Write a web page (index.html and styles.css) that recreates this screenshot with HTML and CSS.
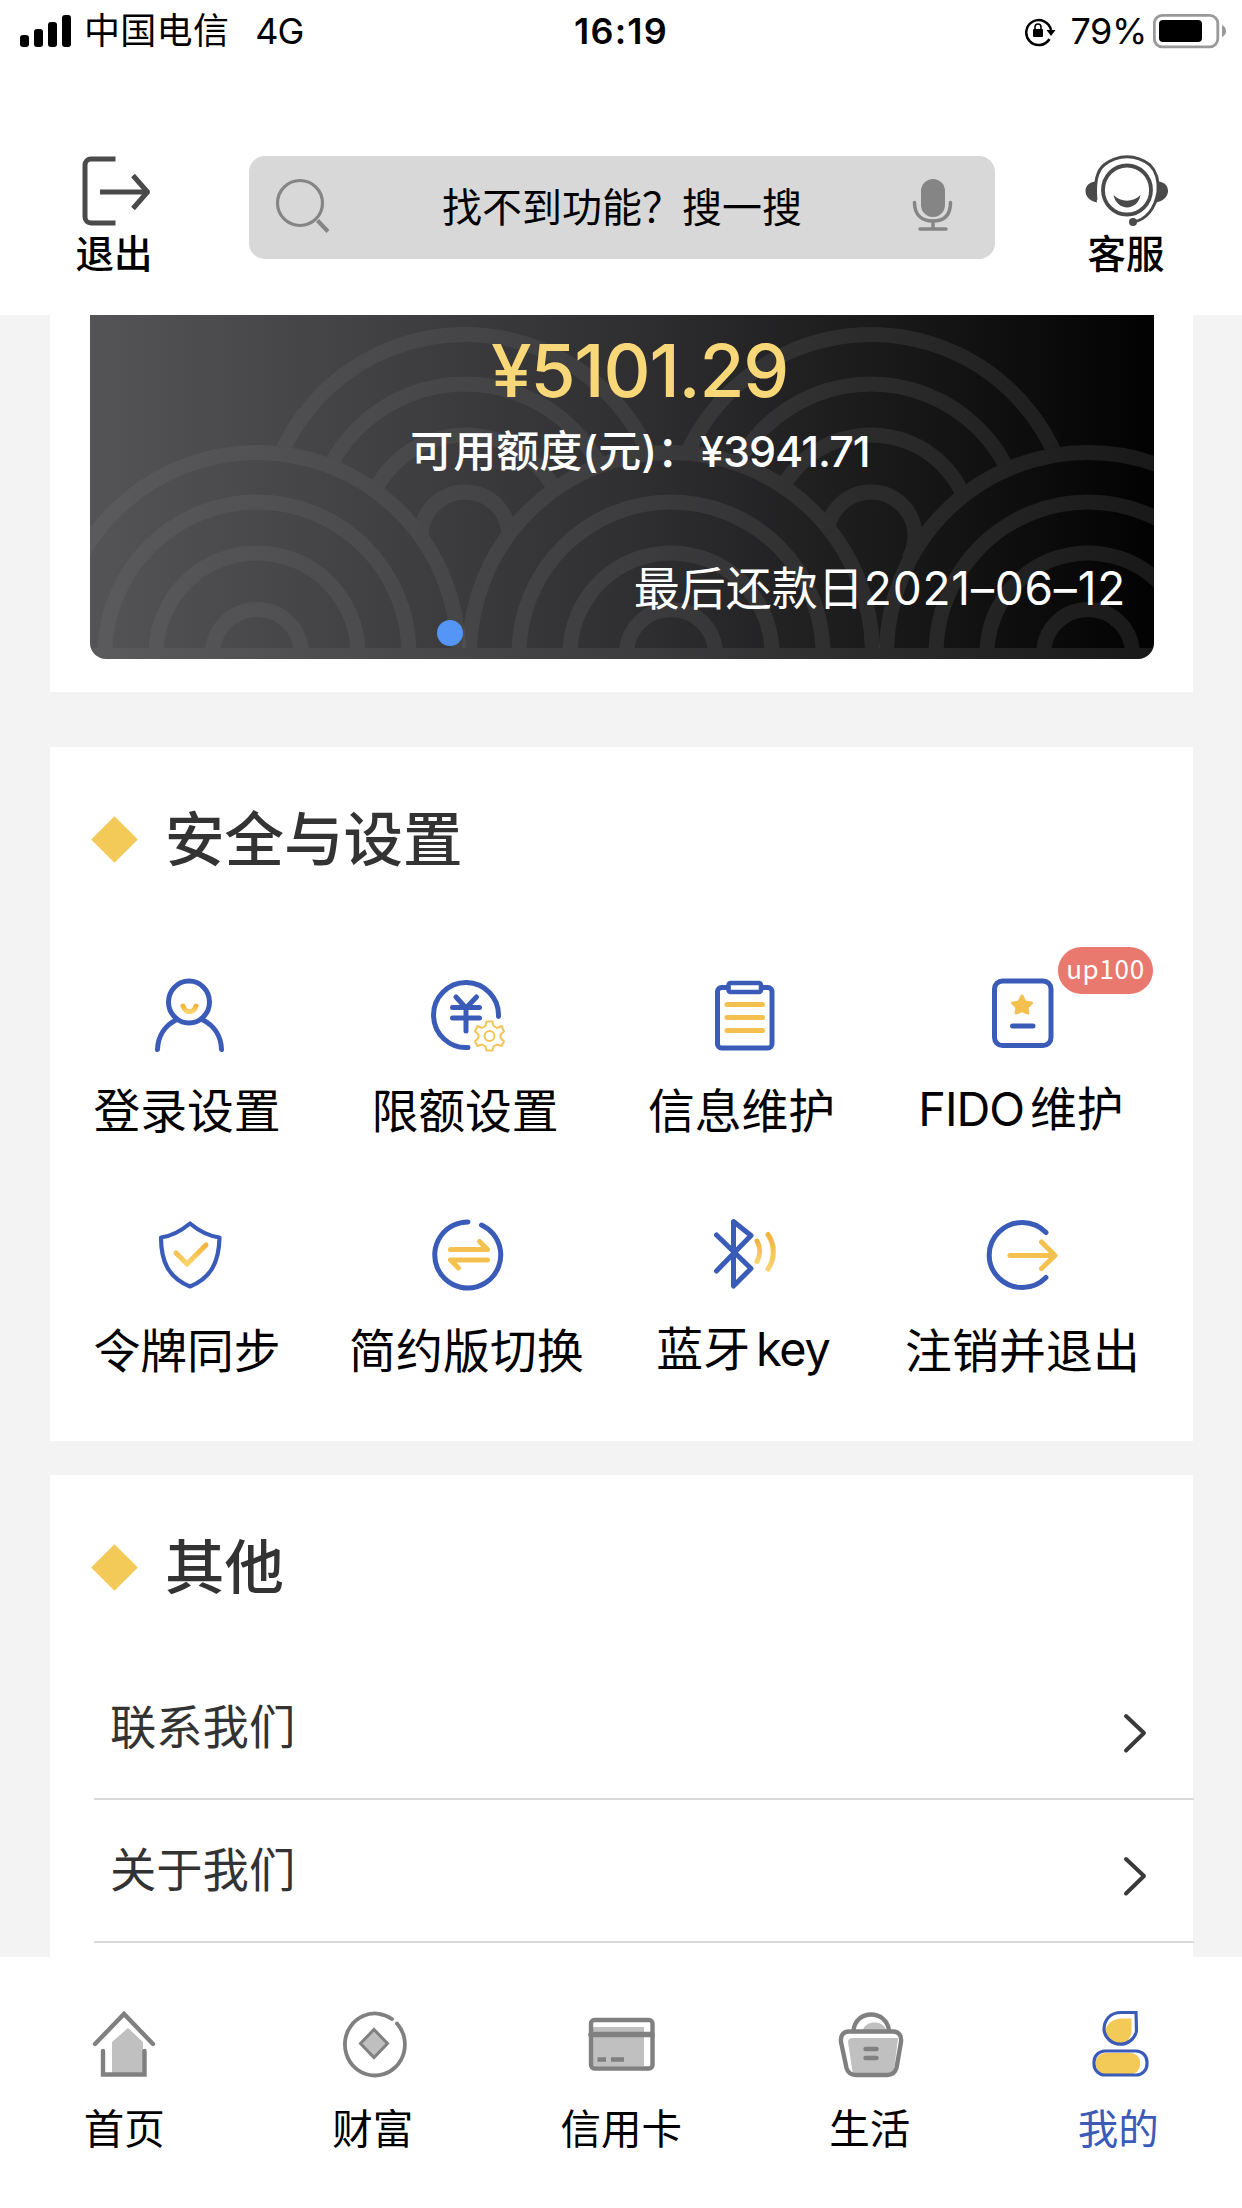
FILE: index.html
```html
<!DOCTYPE html>
<html lang="zh-CN">
<head>
<meta charset="utf-8">
<title>我的</title>
<link rel="stylesheet" href="styles.css">
</head>
<body>
<svg class="defs" width="0" height="0">
  <defs>
    <linearGradient id="gold" x1="0" y1="0" x2="0" y2="1"><stop offset="0" stop-color="#f3b33c"/><stop offset="1" stop-color="#f8d56c"/></linearGradient>
  </defs>
</svg>

<div class="status">
  <div class="status-left">
    <svg width="52" height="34" viewBox="20 13 52 34"><rect x="20" y="34" width="9" height="12" rx="3"/><rect x="34" y="28" width="9" height="18" rx="3"/><rect x="48" y="21" width="9" height="25" rx="3"/><rect x="62" y="14" width="9" height="32" rx="3"/></svg>
    <span class="carrier">中国电信</span><span class="net">4G</span>
  </div>
  <div class="clock">16:19</div>
  <div class="status-right">
    <svg width="34" height="32" viewBox="1021 16 34 32"><path d="M1048.500 40A12.500 12.500 0 1 1 1050 31" fill="none" stroke="#000" stroke-width="2.500"/><path d="M1045.500 31H1054.500L1050 37Z"/><rect x="1032" y="30" width="10" height="8" rx="1"/><path d="M1034 31v-3a3 3 0 0 1 6 0v3" fill="none" stroke="#000" stroke-width="1.600"/></svg>
    <span class="percent">79%</span>
    <svg width="74" height="36" viewBox="1153 12 74 36"><rect x="1154.300" y="14.300" width="63.500" height="31.500" rx="8" fill="none" stroke="#999" stroke-width="2.800"/><rect x="1159" y="19" width="43" height="22" rx="4"/><path d="M1222 24Q1226 26 1226 30T1222 36Z" fill="#999"/></svg>
  </div>
</div>

<header class="header">
  <div class="action">
    <svg width="84" height="76" viewBox="73 152 84 76" fill="none" stroke="#4a4a4a" stroke-width="5"><path d="M116.500 159H92a6 6 0 0 0-6 6V217a6 6 0 0 0 6 6H116.500"/><path d="M101 192H148M134 175.500L148.500 192L134 208.500" stroke-linejoin="round"/></svg>
    <span>退出</span>
  </div>
  <div class="search">
    <svg width="56" height="56" viewBox="274 177 56 56" fill="none" stroke="#858585" stroke-width="3.200"><circle cx="300" cy="203" r="22.500"/><path d="M317.500 220.500L328 231.500" stroke-width="4"/></svg>
    <span>找不到功能&#xFF1F;搜一搜</span>
    <svg width="42" height="56" viewBox="911 177 42 56"><rect x="921" y="179" width="24" height="38" rx="12" fill="#858585"/><path d="M914.500 202.500C914.500 215 922 221 933 221S950.500 215 950.500 202.500M933 221V229M920 229H946" fill="none" stroke="#858585" stroke-width="3.500" stroke-linecap="round"/></svg>
  </div>
  <div class="action">
    <svg width="90" height="76" viewBox="1081 152 90 76" fill="none" stroke="#4a4a4a" stroke-width="3"><ellipse cx="1127" cy="190" rx="24" ry="24.500" stroke-width="3.800"/><path d="M1096 200C1094 180 1098 170 1104 165C1118 154 1136 154 1150 165C1157 172 1159 180 1158 192C1155 209 1146 220 1133 222"/><path d="M1113.500 195C1121 202.500 1133 202.500 1140.500 195C1138 211 1117 212 1113.500 195Z" fill="#4a4a4a" stroke="none"/><path d="M1095 181.500C1082 183 1082 200 1097 202.500ZM1159 181.500C1171.500 183 1171.500 200 1156 202.500Z" fill="#4a4a4a" stroke="none"/><circle cx="1133" cy="222" r="4" fill="#4a4a4a" stroke="none"/></svg>
    <span>客服</span>
  </div>
</header>

<main class="content">
  <section class="panel account">
    <div class="bankcard">
      <svg class="waves" width="1064" height="344" viewBox="90 315 1064 344" fill="none" stroke="url(#wave)" stroke-width="15">
        <defs>
          <linearGradient id="wave" gradientUnits="userSpaceOnUse" x1="90" y1="0" x2="1154" y2="0"><stop offset="0" stop-color="#fff" stop-opacity=".04"/><stop offset="1" stop-color="#fff" stop-opacity=".09"/></linearGradient>
          <mask id="behind" maskUnits="userSpaceOnUse" x="90" y="315" width="1064" height="344"><rect x="90" y="315" width="1064" height="241" fill="#fff"/><g fill="#000" stroke="none"><circle cx="257" cy="654" r="209"/><circle cx="671" cy="654" r="209"/><circle cx="1088" cy="654" r="209"/></g></mask>
          <clipPath id="floor"><rect x="90" y="315" width="1064" height="333"/></clipPath>
        </defs>
        <g mask="url(#behind)"><circle cx="465" cy="536" r="201.500"/><circle cx="465" cy="536" r="152"/><circle cx="465" cy="536" r="101"/><circle cx="465" cy="536" r="44"/><circle cx="871" cy="536" r="201.500"/><circle cx="871" cy="536" r="152"/><circle cx="871" cy="536" r="101"/><circle cx="871" cy="536" r="44"/></g>
        <g clip-path="url(#floor)"><circle cx="257" cy="654" r="201.500"/><circle cx="257" cy="654" r="152"/><circle cx="257" cy="654" r="101"/><circle cx="257" cy="654" r="44.500"/><circle cx="671" cy="654" r="201.500"/><circle cx="671" cy="654" r="152"/><circle cx="671" cy="654" r="101"/><circle cx="671" cy="654" r="44.500"/><circle cx="1088" cy="654" r="201.500"/><circle cx="1088" cy="654" r="152"/><circle cx="1088" cy="654" r="101"/><circle cx="1088" cy="654" r="44.500"/></g>
        <rect x="90" y="648" width="1064" height="11" fill="url(#wave)" stroke="none"/>
      </svg>
      <div class="amount">¥5101.29</div>
      <div class="limit">可用额度(元)&#xFF1A;<span class="limit-value">¥3941.71</span></div>
      <div class="due">最后还款日<span class="due-date">2021–06–12</span></div>
      <i class="dot"></i>
    </div>
  </section>

  <section class="panel settings">
    <h2 class="title"><i class="diamond"></i>安全与设置</h2>
    <div class="grid">
      <div class="cell">
        <svg class="icon" viewBox="147 975 80 80"><ellipse cx="189" cy="1002" rx="20.500" ry="21"/><path d="M157.500 1049.500C158 1035 166 1025 176 1020M221.500 1049.500C221 1035 213 1025 203 1020"/><path class="gold" d="M183 1006C185.500 1013.500 193.500 1013.500 196 1006"/></svg>
        <span>登录设置</span>
      </div>
      <div class="cell">
        <svg class="icon" viewBox="425 975 80 80"><path d="M498.500 1016.500A32.500 32.500 0 1 0 468 1047.500"/><path d="M456 997L466 1008L476.500 997M452.500 1007.500H479.500M452.500 1018H479.500M466 1008V1031"/><g class="gear"><circle cx="489.500" cy="1036" r="5"/><path d="M486.500 1021.500H492.500L493.500 1026L497 1028L501.500 1026L504 1031.500L500.500 1034.500V1038L504 1041.500L501.500 1046L497 1044.500L493.500 1046.500L492.500 1050.500H486.500L485.500 1046.500L482 1044.500L477.500 1046L475 1041.500L478.500 1038V1034.500L475 1031.500L477.500 1026L482 1028L485.500 1026Z"/></g></svg>
        <span>限额设置</span>
      </div>
      <div class="cell nudge">
        <svg class="icon" viewBox="703 975 80 80"><path d="M728 987.500H721.500a4 4 0 0 0-4 4V1044a4 4 0 0 0 4 4H768a4 4 0 0 0 4-4V991.500a4 4 0 0 0-4-4H762"/><rect x="728.500" y="983" width="32.500" height="9" rx="2" stroke-width="4.500"/><path class="flat" d="M727 1004.500H762.500M727 1017.500H762.500M727 1030.500H762.500"/></svg>
        <span>信息维护</span>
      </div>
      <div class="cell raised">
        <svg class="icon" viewBox="981 975 80 80"><rect x="994.500" y="981" width="56.500" height="64.500" rx="8"/><path d="M1012.500 1026H1033" /><path class="star" d="M1022 996L1025 1002L1031.500 1003L1027 1007.500L1028 1013L1022 1010.500L1016 1013L1017 1007.500L1012.500 1003L1019 1002Z"/></svg>
        <span><b class="fido">FIDO</b><b class="thin">维护</b></span>
        <em class="badge">up100</em>
      </div>
      <div class="cell">
        <svg class="icon" viewBox="147 1215 80 80"><path stroke-width="4.200" d="M190 1223.500C181 1231 172 1236 161 1237.500C161 1262 169 1278 190 1286.500C211 1278 219 1262 219.500 1237.500C208 1236 199 1231 190 1223.500Z"/><path class="gold" d="M176 1253L187 1264L206 1245"/></svg>
        <span>令牌同步</span>
      </div>
      <div class="cell">
        <svg class="icon" viewBox="425 1215 80 80"><path d="M481.500 1225A33 33 0 1 1 468 1222"/><path class="flat" d="M450.500 1249.500H487.500L479.500 1241.500M487.500 1260H450.500L458.500 1268"/></svg>
        <span class="wide">简约版切换</span>
      </div>
      <div class="cell raised">
        <svg class="icon" viewBox="703 1215 80 80"><path d="M716.500 1235L751 1268.500L733.500 1286V1221.500L751 1235.500L716.500 1271"/><path class="gold" d="M757 1241C760.500 1247 760.500 1255 757 1261.500"/><path class="gold" d="M768 1234.500C775 1245 775 1259 768 1269"/></svg>
        <span>蓝牙<b class="key">key</b></span>
      </div>
      <div class="cell">
        <svg class="icon" viewBox="981 1215 80 80"><path d="M1046 1232.500A33 32.500 0 1 0 1046 1277.500"/><path class="flat" d="M1010 1255.500H1054M1041.500 1242L1055 1255.500L1041.500 1268.500"/></svg>
        <span class="wide">注销并退出</span>
      </div>
    </div>
  </section>

  <section class="panel others">
    <h2 class="title"><i class="diamond"></i>其他</h2>
    <div class="list">
      <div class="row"><span>联系我们</span><svg class="chevron" viewBox="0 0 26 42"><path d="M4 4L22 21L4 38.500"/></svg></div>
      <div class="row"><span>关于我们</span><svg class="chevron" viewBox="0 0 26 42"><path d="M4 4L22 21L4 38.500"/></svg></div>
    </div>
  </section>
</main>

<nav class="tabs">
  <div class="tab">
    <svg class="tab-icon" viewBox="84 2004 80 80"><path class="fill" d="M112 2075V2042L128 2028L143 2042V2075Z"/><path d="M95 2044L124 2014L153 2044M103 2051V2074.500H144.500V2051"/></svg>
    <span>首页</span>
  </div>
  <div class="tab">
    <svg class="tab-icon" viewBox="334 2004 80 80"><path d="M398 2023.500A30 31 0 1 1 393 2019" stroke-width="3.800"/><path d="M375 2029.500L388.500 2043.500L375 2057.500L361.500 2043.500Z" fill="#bfbfbf" stroke-width="3"/></svg>
    <span>财富</span>
  </div>
  <div class="tab">
    <svg class="tab-icon" viewBox="581 2004 80 80"><path class="fill" d="M593 2027H644V2066H593Z"/><rect x="591" y="2020" width="61.500" height="48.500" rx="3.500"/><path d="M591 2034.500H652" stroke-width="5.500"/><path d="M597.500 2059.500H606M611 2059.500H624" stroke-linecap="butt"/></svg>
    <span>信用卡</span>
  </div>
  <div class="tab">
    <svg class="tab-icon" viewBox="831 2004 80 80"><path class="fill" d="M864 2030C866 2020 885 2020 887 2030ZM849 2042Q849 2038 854 2038H899L895 2070Q893 2075 888 2075H854Z"/><path d="M854.500 2031C856 2009 888 2009 890 2031M850 2031.500H894Q903 2032 902 2042L897.500 2068Q895.500 2075 888 2075H857Q849.500 2075 847.500 2068L842 2042Q841 2032 850 2031.500Z"/><path d="M866.500 2049H877.500M866.500 2058H877.500"/></svg>
    <span>生活</span>
  </div>
  <div class="tab active">
    <svg class="tab-icon" viewBox="1078 2004 80 80"><path class="fill" d="M1131.500 2018.500H1122C1112 2018.500 1105 2025 1105 2033C1107 2042 1113 2045 1119 2045C1127 2044 1131.500 2037 1131.500 2031Z"/><rect class="fill" x="1096" y="2053" width="44" height="21" rx="9"/><path d="M1136 2012.500H1121C1110 2012.500 1104 2020 1104 2030A16.500 16.500 0 0 0 1136.500 2031Z"/><rect x="1094" y="2051" width="53" height="24" rx="11"/></svg>
    <span>我的</span>
  </div>
</nav>
</body>
</html>
```
FILE: styles.css
```css
* { box-sizing: border-box; margin: 0; padding: 0; }
body {
  width: 1242px;
  height: 2208px;
  overflow: hidden;
  display: flex;
  flex-direction: column;
  background: #f3f3f3;
  color: #000;
  font-family: Inter, "Noto Sans CJK SC", sans-serif;
}
svg { display: block; flex: none; }
span, div, h2 { white-space: nowrap; }
.defs { position: absolute; }

/* status bar */
.status {
  height: 62px;
  flex: none;
  display: grid;
  grid-template-columns: 1fr auto 1fr;
  align-items: center;
  padding: 0 15px 0 20px;
  background: #fff;
  font-size: 36px;
  line-height: 62px;
}
.status-left, .status-right { display: flex; align-items: center; }
.status-right { justify-content: flex-end; }
.carrier { margin-left: 12px; letter-spacing: .3px; }
.net { margin-left: 26px; letter-spacing: -1px; }
.clock { margin-right: 5px; font-weight: 600; letter-spacing: 1.2px; }
.percent { margin: 0 6px 0 15px; letter-spacing: -.4px; }

/* header */
.header {
  height: 253px;
  flex: none;
  display: flex;
  align-items: flex-start;
  justify-content: space-between;
  padding: 90px 74px 0 72px;
  background: #fff;
}
.action {
  width: 84px;
  display: flex;
  flex-direction: column;
  align-items: center;
  font-size: 38.5px;
  font-weight: 500;
  line-height: 52px;
}
.search {
  width: 746px;
  height: 103px;
  margin: 4px 0 0 3px;
  padding: 0 42px 5px 25px;
  display: flex;
  align-items: center;
  justify-content: space-between;
  border-radius: 16px;
  background: #d8d8d8;
  font-size: 40px;
}
.search span { margin-left: 4px; }

/* scrolling content */
.content {
  flex: 1;
  min-height: 0;
  overflow: hidden;
  display: flex;
  flex-direction: column;
  padding: 0 49px 0 50px;
}
.panel { flex: none; background: #fff; }
.account { height: 377px; margin-bottom: 55px; padding: 0 39px 0 40px; }
.bankcard {
  position: relative;
  height: 344px;
  overflow: hidden;
  border-radius: 0 0 16px 16px;
  background: linear-gradient(90deg, #545456 0%, #303032 50%, #19191a 75%, #020202 100%);
  color: #fff;
  padding-top: 15px;
}
.waves { position: absolute; left: 0; top: 0; }
.amount, .limit, .due { position: relative; }
.amount {
  height: 81px;
  line-height: 81px;
  padding-left: 35px;
  text-align: center;
  color: #f8d778;
  font-size: 73px;
  font-weight: 500;
  letter-spacing: -1.2px;
}
.limit {
  height: 80px;
  line-height: 80px;
  padding-left: 36px;
  text-align: center;
  font-size: 43px;
  font-weight: 500;
}
.limit-value { letter-spacing: -1px; }
.due {
  height: 80px;
  margin-top: 57px;
  padding-right: 28px;
  line-height: 80px;
  text-align: right;
  font-size: 46px;
}
.due-date { letter-spacing: .8px; }
.dot {
  position: absolute;
  left: 347px;
  top: 305px;
  width: 26px;
  height: 26px;
  border-radius: 50%;
  background: #5495f6;
}

.title {
  display: flex;
  align-items: center;
  height: 80px;
  color: #333;
  font-size: 59.5px;
  font-weight: 500;
  line-height: 80px;
}
.diamond {
  width: 33px;
  height: 33px;
  margin: 0 34px 0 48px;
  transform: rotate(45deg);
  background: #f3c957;
}
.settings { height: 694px; margin-bottom: 34px; padding-top: 52px; }
.grid {
  display: grid;
  grid-template-columns: repeat(4, 278px);
  grid-auto-rows: 240px;
  margin: 96px 0 0 -2px;
}
.cell {
  position: relative;
  display: flex;
  flex-direction: column;
  align-items: center;
  gap: 26px;
  font-size: 46.8px;
  line-height: 60px;
}
.raised { gap: 24px; }
.nudge span { margin-left: -3px; }
.wide { letter-spacing: .2px; margin-left: 3px; }
.fido, .thin, .key { font-weight: 400; }
.fido { letter-spacing: -1px; }
.thin { margin-left: 6px; }
.key { margin-left: 6px; letter-spacing: -1.2px; }
.icon {
  width: 80px;
  height: 80px;
  overflow: visible;
  fill: none;
  stroke: #3a5cb8;
  stroke-width: 5px;
  stroke-linecap: round;
  stroke-linejoin: round;
}
.icon .gold { stroke: url(#gold); }
.icon .flat { stroke: #f4c150; }
.icon .gear { stroke: #f5c459; stroke-width: 2px; }
.icon .star { stroke: #f4c150; fill: #f4c150; stroke-width: 3px; }
.badge {
  position: absolute;
  left: 176px;
  top: -28px;
  width: 95px;
  height: 47px;
  border-radius: 24px;
  background: #e9796e;
  color: #fff;
  font: 400 26px/42px "Noto Sans CJK SC", sans-serif;
  letter-spacing: .7px;
  text-align: center;
}

.others { height: 600px; padding-top: 52px; }
.list { margin: 50px -1px 0 44px; }
.row {
  height: 143px;
  display: flex;
  align-items: center;
  justify-content: space-between;
  padding: 0 46px 0 16px;
  border-bottom: 2px solid #d9d9d9;
  color: #333;
  font-size: 46.3px;
}
.row span { margin-bottom: 9px; }
.chevron {
  width: 26px;
  height: 42px;
  margin-top: 10px;
  fill: none;
  stroke: #3a3a3a;
  stroke-width: 4px;
  stroke-linecap: round;
  stroke-linejoin: round;
}

/* bottom tabs */
.tabs {
  height: 251px;
  flex: none;
  display: grid;
  grid-template-columns: repeat(5, 248.5px);
  padding-top: 47px;
  background: #fff;
}
.tab {
  display: flex;
  flex-direction: column;
  align-items: center;
  gap: 21px;
  font-size: 40.5px;
  line-height: 50px;
}
.active { color: #3a5cb8; }
.tab-icon {
  width: 80px;
  height: 80px;
  fill: none;
  stroke: #808080;
  stroke-width: 4.4px;
  stroke-linecap: round;
}
.tab-icon .fill { fill: #c0c0c0; stroke: none; }
.active .tab-icon { stroke: #3a5cb8; stroke-width: 3.2px; }
.active .tab-icon .fill { fill: #f3c957; }
```
